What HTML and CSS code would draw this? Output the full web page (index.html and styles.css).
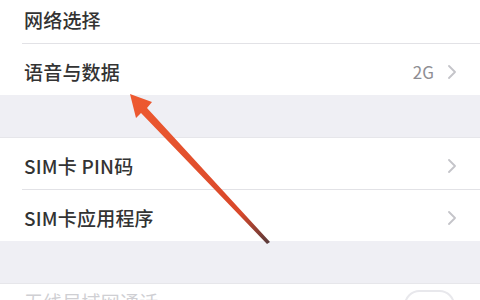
FILE: index.html
```html
<!DOCTYPE html>
<html lang="zh">
<head>
<meta charset="utf-8">
<link rel="stylesheet" href="styles.css">
</head>
<body>
<div class="screen">
  <div class="group first">
    <div class="row sep"><span class="label">网络选择</span></div>
    <div class="row"><span class="label">语音与数据</span><span class="detail">2G</span><svg class="chev" viewBox="0 0 8 14"><polyline points="1,1 7,7 1,13"/></svg></div>
  </div>
  <div class="band"></div>
  <div class="group">
    <div class="row sep"><span class="label">SIM卡 PIN码</span><span class="detail"></span><svg class="chev" viewBox="0 0 8 14"><polyline points="1,1 7,7 1,13"/></svg></div>
    <div class="row"><span class="label">SIM卡应用程序</span><span class="detail"></span><svg class="chev" viewBox="0 0 8 14"><polyline points="1,1 7,7 1,13"/></svg></div>
  </div>
  <div class="band"></div>
  <div class="group">
    <div class="row last"><span class="label faint">无线局域网通话</span><span class="toggle"></span></div>
  </div>
  <svg class="arrow" viewBox="0 0 480 300" width="480" height="300">
    <defs>
      <linearGradient id="g" x1="130" y1="95" x2="268" y2="243" gradientUnits="userSpaceOnUse">
        <stop offset="0" stop-color="#ee5a30"/>
        <stop offset="0.8" stop-color="#d9482a"/>
        <stop offset="1" stop-color="#5a3a3a"/>
      </linearGradient>
    </defs>
    <polygon fill="url(#g)" points="130,94 152,102 147,108 270,242 267,244 141,113 136,118"/>
  </svg>
</div>
</body>
</html>
```
FILE: styles.css
```css
html, body {
  margin: 0;
  padding: 0;
  background: #ffffff;
}
.screen {
  position: relative;
  width: 480px;
  height: 300px;
  overflow: hidden;
  display: flex;
  flex-direction: column;
  font-family: "Noto Sans CJK SC", "Noto Sans", sans-serif;
  background: #ffffff;
}
.group {
  background: #ffffff;
  display: flex;
  flex-direction: column;
  flex-shrink: 0;
}
.group.first {
  margin-top: -8px;
}
.row {
  height: 51px;
  display: flex;
  align-items: center;
  padding: 5px 24px 0 24px;
  box-sizing: border-box;
  flex-shrink: 0;
}
.row.sep {
  height: 52px;
  margin-left: 22px;
  padding-left: 2px;
  border-bottom: 1px solid #e2e2e6;
}
.row.last {
  align-items: flex-start;
  padding-top: 7px;
  height: 40px;
}
.label {
  font-size: 19px;
  line-height: 22px;
  font-weight: 500;
  color: #333333;
  flex: 1;
  letter-spacing: 0.2px;
}
.label.faint {
  color: #cfcfd3;
  font-weight: 400;
}
.detail {
  font-size: 17px;
  color: #8e8e93;
  margin-right: 14px;
  line-height: 20px;
}
.chev {
  width: 8px;
  height: 14px;
  fill: none;
  stroke: #c4c4c9;
  stroke-width: 1.8;
  stroke-linecap: round;
  stroke-linejoin: round;
}
.band {
  height: 43px;
  flex-shrink: 0;
  background: #efeff4;
  border-bottom: 1px solid #e6e6ea;
  box-sizing: border-box;
}
.toggle {
  width: 51px;
  height: 31px;
  border-radius: 16px;
  border: 2px solid #e8e8ec;
  box-sizing: border-box;
  margin-top: -1px;
  margin-right: 1px;
  background: #ffffff;
}
.arrow {
  position: absolute;
  left: 0;
  top: 0;
}
```
